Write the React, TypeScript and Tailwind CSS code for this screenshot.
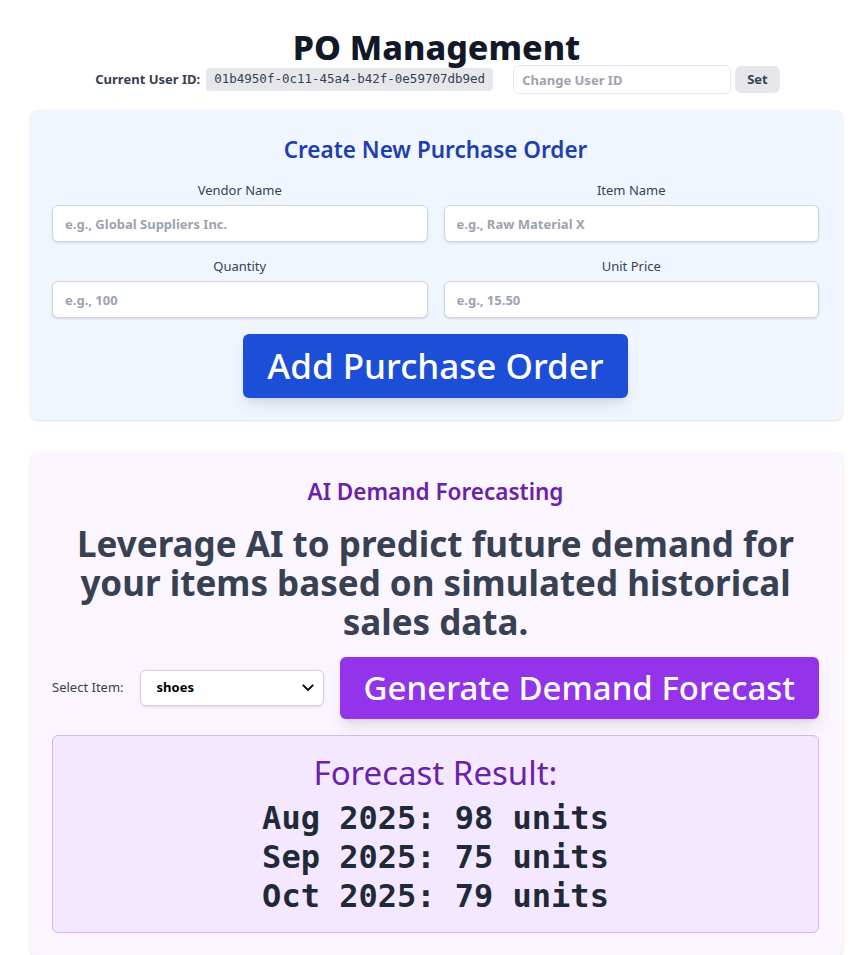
import { useState } from "react";

const sans = "font-['Noto_Sans',sans-serif]";
const mono = "font-['DejaVu_Sans_Mono',monospace]";

const Field = ({ label, placeholder }: { label: string; placeholder: string }) => (
  <div className="flex flex-col">
    <label className="text-[13px] text-[#374151] text-center mb-[5px] leading-5">{label}</label>
    <input
      placeholder={placeholder}
      className="h-[37px] px-3 rounded-md border border-[#d1d5db] bg-white shadow-sm text-[13px] font-bold placeholder:text-[#9ca3af] outline-none"
    />
  </div>
);

export default function App() {
  const [item, setItem] = useState("shoes");

  return (
    <div className={`${sans} bg-white min-h-screen pl-[30px] pr-[19px] pt-[26px]`}>
      <header className="flex flex-col items-center">
        <h1 className="text-[34px] leading-[42px] font-extrabold text-[#111827]">PO Management</h1>
        <div className="flex items-center mt-[-3px] text-[13px] pl-[2px]">
          <span className="font-bold text-[#374151] mr-[6px]">Current User ID:</span>
          <code className={`${mono} bg-[#e5e7eb] rounded px-2 py-[2px] text-[12.5px] text-[#374151]`}>
            01b4950f-0c11-45a4-b42f-0e59707db9ed
          </code>
          <input
            placeholder="Change User ID"
            className="ml-5 w-[218px] h-[29px] px-2 rounded-md border border-[#e5e7eb] text-[13px] font-bold placeholder:text-[#9ca3af] outline-none"
          />
          <button className="ml-1 h-[27px] px-[12px] rounded-md bg-[#e5e7eb] font-bold text-[#374151]">Set</button>
        </div>
      </header>

      <section className="mt-[16px] bg-[#eff6ff] rounded-lg shadow-sm pl-[22px] pr-[24px] pt-[24px] pb-[22px]">
        <h2 className="text-center text-[22.5px] leading-8 font-semibold text-[#1e40af] mb-[14px]">
          Create New Purchase Order
        </h2>
        <div className="grid grid-cols-2 gap-x-4 gap-y-[14px]">
          <Field label="Vendor Name" placeholder="e.g., Global Suppliers Inc." />
          <Field label="Item Name" placeholder="e.g., Raw Material X" />
          <Field label="Quantity" placeholder="e.g., 100" />
          <Field label="Unit Price" placeholder="e.g., 15.50" />
        </div>
        <div className="flex justify-center mt-4">
          <button className="w-[385px] h-[64px] rounded-md bg-[#1d4ed8] text-white text-[35px] font-medium shadow-lg">
            Add Purchase Order
          </button>
        </div>
      </section>

      <section className="mt-[32px] bg-[#faf5ff] rounded-lg shadow-sm pl-[22px] pr-[24px] pt-[24px] pb-[24px]">
        <h2 className="text-center text-[22.5px] leading-8 font-semibold text-[#6b21a8]">AI Demand Forecasting</h2>
        <p className="mt-[16px] text-center text-[35px] leading-[39px] font-bold text-[#374151] px-2">
          Leverage AI to predict future demand for your items based on simulated historical sales data.
        </p>
        <div className="flex items-center mt-[16px]">
          <span className="text-[13px] text-[#374151]">Select Item:</span>
          <div className="relative ml-4">
            <select
              value={item}
              onChange={(e) => setItem(e.target.value)}
              className="appearance-none w-[184px] h-[36px] pl-4 pr-8 rounded-md border border-[#d1d5db] bg-white shadow-sm text-[13px] font-bold text-black outline-none"
            >
              <option value="shoes">shoes</option>
              <option value="shirts">shirts</option>
            </select>
            <svg
              className="absolute right-[8px] top-[10px] pointer-events-none"
              width="16"
              height="16"
              viewBox="0 0 24 24"
              fill="none"
              stroke="#111"
              strokeWidth="3"
              strokeLinecap="round"
              strokeLinejoin="round"
            >
              <path d="M5 8l7 7 7-7" />
            </svg>
          </div>
          <button className="ml-4 flex-1 h-[62px] rounded-md bg-[#9333ea] text-white text-[33px] font-medium shadow-lg">
            Generate Demand Forecast
          </button>
        </div>
        <div className="mt-[16px] rounded-md border border-[#d8b4fe] bg-[#f3e8ff] pt-[16px] pb-[16px] text-center">
          <h3 className="text-[33px] leading-[42px] text-[#6b21a8]">Forecast Result:</h3>
          <div className={`${mono} mt-[5px] text-[32px] leading-[39px] font-bold text-[#1f2937]`}>
            <div>Aug 2025: 98 units</div>
            <div>Sep 2025: 75 units</div>
            <div>Oct 2025: 79 units</div>
          </div>
        </div>
      </section>
    </div>
  );
}
